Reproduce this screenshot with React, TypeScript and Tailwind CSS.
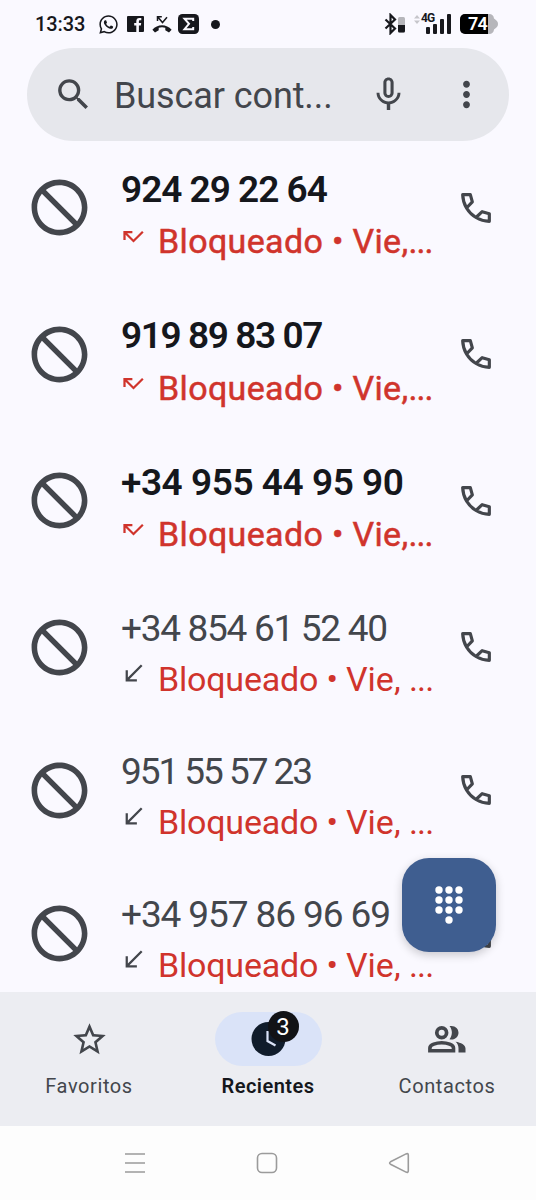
import { clsx } from "clsx";
import {
  MdBlock,
  MdCallMissed,
  MdCallReceived,
  MdMicNone,
  MdMoreVert,
  MdSearch,
  MdStarBorder,
} from "react-icons/md";
import { FaWhatsapp } from "react-icons/fa";

type Call = {
  number: string;
  day: string;
  missed: boolean;
  tracking: string;
};

const CALLS: Call[] = [
  { number: "924 29 22 64", day: "Vie,", missed: true, tracking: "tracking-[-1px]" },
  { number: "919 89 83 07", day: "Vie,", missed: true, tracking: "tracking-[-1.4px]" },
  { number: "+34 955 44 95 90", day: "Vie,", missed: true, tracking: "tracking-[-0.45px]" },
  { number: "+34 854 61 52 40", day: "Vie, ", missed: false, tracking: "tracking-[-1.3px]" },
  { number: "951 55 57 23", day: "Vie, ", missed: false, tracking: "tracking-[-2.05px]" },
  { number: "+34 957 86 96 69", day: "Vie, ", missed: false, tracking: "tracking-[-1.1px]" },
];

const DIALPAD_DOTS = [
  [4, 4], [14, 4], [24, 4],
  [4, 14], [14, 14], [24, 14],
  [4, 24], [14, 24], [24, 24],
  [14, 34],
];

function CallIcon({ className }: { className?: string }) {
  return (
    <svg className={className} viewBox="0 0 24 24" fill="none" stroke="currentColor" strokeWidth="1.9" strokeLinejoin="round">
      <path d="M4 4h4.600l1.200 4.300L6.300 12C4.900 9.600 4.100 6.900 4 4zM6.300 12c1.400 2.300 3.300 4.300 5.700 5.700l3.700-3.500 4.300 1.200V20c-2.900-.1-5.600-.9-8-2.300" />
    </svg>
  );
}

function StatusBar() {
  return (
    <div className="flex h-12 shrink-0 items-center pl-[35px] text-[#17181d]">
      <span className="w-[63px] text-[20px] leading-none font-medium tracking-[-0.1px]">13:33</span>
      <FaWhatsapp className="size-[21px]" />
      <svg className="ml-[8px]" width="17" height="16" viewBox="0 0 17 16">
        <rect width="17" height="16" rx="1" fill="#17181d" />
        <path d="M9.3 16V9.6H7.2V7h2.1V5.2c0-2.1 1.2-3.3 3.1-3.3h1.900v2.400h-1.200c-1 0-1.200.5-1.200 1.200V7h2.300l-.4 2.600h-1.900V16z" fill="#faf9ff" />
      </svg>
      <svg className="ml-[8px]" width="20" height="18" viewBox="0 0 20 18">
        <path d="M.4 14.800c5-6.200 14.200-6.200 19.200 0l-2.600 2.600-3.700-2.200v-2.400c-2.200-.7-4.400-.7-6.600 0v2.400l-3.700 2.200z" fill="#17181d" />
        <path d="M5.500 6V1.700H9.800M5.800 2l4.700 5.500L15 2.200" fill="none" stroke="#17181d" strokeWidth="1.500" />
      </svg>
      <svg className="ml-[6px]" width="21" height="20" viewBox="0 0 21 20">
        <rect width="21" height="20" rx="4.500" fill="#17181d" />
        <path d="M15.200 7V4.700H6.500l4.500 5.100-4.500 5.400h8.700v-2.300" fill="none" stroke="#faf9ff" strokeWidth="2" />
      </svg>
      <span className="ml-[12px] size-[9px] rounded-full bg-[#17181d]" />

      {/* Bluetooth, signal and battery */}
      <svg className="ml-[164px]" width="22" height="22" viewBox="0 0 22 22">
        <path d="M1.500 6.500l9.500 9-4.500 4.500V2l4.500 4.500-9.500 9" fill="none" stroke="#17181d" strokeWidth="2.200" />
        <rect x="14" y="4" width="7" height="15.500" rx="1.500" fill="#b6b6bb" />
        <path d="M14 12h7V18a1.500 1.500 0 0 1-1.500 1.500h-4a1.500 1.500 0 0 1-1.500-1.500z" fill="#17181d" />
      </svg>
      <div className="relative ml-[8px] h-[22px] w-[38px]">
        <svg width="38" height="22" viewBox="0 0 38 22">
          <path d="M0 5.500l3-3.500 3 3.500zM0 7.500h6L3 11z" fill="#c6c6cb" />
          <g fill="#17181d">
            <rect x="12" y="14" width="4" height="7" rx="1" />
            <rect x="19" y="11" width="4" height="10" rx="1" />
            <rect x="26" y="6" width="4" height="15" rx="1" />
            <rect x="33" y="1" width="4" height="20" rx="1" />
          </g>
        </svg>
        <span className="absolute -top-[1px] left-[7px] text-[12px] leading-[12px] font-bold tracking-[-0.8px]">4G</span>
      </div>
      <div className="relative ml-[8px] h-[20px] w-[38px]">
        <svg width="38" height="20" viewBox="0 0 38 20">
          <path d="M5 0H29a5 5 0 0 1 5 4.500c3 2 4 3.500 4 5.500s-1 3.500-4 5.500a5 5 0 0 1-5 4.500H5a5 5 0 0 1-5-5V5a5 5 0 0 1 5-5z" fill="#b6b6bb" />
          <path d="M5 0H28V20H5a5 5 0 0 1-5-5V5a5 5 0 0 1 5-5z" fill="#000" />
        </svg>
        <span className="absolute top-0 left-[8px] text-[18px] leading-[20px] font-semibold tracking-[-0.7px] text-white">74</span>
      </div>
    </div>
  );
}

function SearchBar() {
  return (
    <div className="mx-[27px] flex h-[93px] shrink-0 items-center rounded-full bg-[#e6e7ec] pl-[26px] text-[#43464c]">
      <MdSearch className="size-[41px]" />
      <span className="mt-[2px] ml-[20px] w-[236px] text-[36px] leading-none tracking-[-0.1px] whitespace-nowrap">
        Buscar cont...
      </span>
      <MdMicNone className="ml-[18px] size-[41px]" />
      <MdMoreVert className="ml-[36.500px] size-[41px]" />
    </div>
  );
}

function CallRow({ call }: { call: Call }) {
  return (
    <div className={clsx("flex shrink-0 text-[#43464c]", call.missed ? "h-[146.500px]" : "h-[143px]")}>
      <MdBlock className="mt-[33px] ml-[26px] size-[67px] shrink-0 -scale-x-100" />
      <div className="ml-[27px] w-[330px] shrink-0 pt-[24.500px]">
        <div
          className={clsx(
            "pl-px text-[37px] leading-[48px] whitespace-nowrap",
            call.missed ? "font-semibold text-[#15171c]" : "font-normal",
            call.tracking,
          )}
        >
          {call.number}
        </div>
        <div className={clsx("flex items-start", call.missed ? "pt-[4.500px]" : "pt-[3px]")}>
          {call.missed ? (
            <MdCallMissed className="mt-[5px] size-[27px] text-[#d0342c]" />
          ) : (
            <MdCallReceived className="mt-[4px] size-[27px]" />
          )}
          <div
            className={clsx(
              "ml-[11px] text-[34px] leading-[46px] whitespace-pre text-[#d0342c]",
              call.missed && "[-webkit-text-stroke:0.5px_#d0342c]",
            )}
          >
            <span className={call.missed ? "tracking-[0.35px]" : "tracking-[-0.2px]"}>{"Bloqueado • "}</span>
            <span className={call.missed ? "tracking-[0.3px]" : "tracking-normal"}>{call.day}</span>
            <span className="tracking-[-0.9px]">...</span>
          </div>
        </div>
      </div>
      <CallIcon className="mt-[46.500px] ml-[6px] size-[40px] shrink-0" />
    </div>
  );
}

function BottomNav() {
  return (
    <div className="grid h-[134px] shrink-0 grid-cols-[178px_180px_178px] bg-[#ecedf2] text-[20px] text-[#43464c]">
      <div className="flex flex-col items-center pt-[20px]">
        <div className="flex h-[54px] items-center">
          <MdStarBorder className="size-[39px]" />
        </div>
        <span className="mt-[6px] leading-[28px] tracking-[0.6px]">Favoritos</span>
      </div>
      <div className="flex flex-col items-center pt-[20px]">
        <div className="relative h-[54px] w-[107px] rounded-full bg-[#dae3f8]">
          <svg className="absolute top-[10px] left-[36px]" width="35" height="35" viewBox="0 0 35 35">
            <circle cx="17.500" cy="17" r="17" fill="#101c2b" />
            <path d="M16.500 9v10l8 4.500" fill="none" stroke="#dae3f8" strokeWidth="2.200" />
          </svg>
          <span className="absolute -top-[1px] left-[53px] flex size-[31px] items-center justify-center rounded-full bg-[#121316] text-[24px] leading-none text-white">
            3
          </span>
        </div>
        <span className="mt-[6px] leading-[28px] font-semibold tracking-[0.45px] text-[#15171c]">Recientes</span>
      </div>
      <div className="flex flex-col items-center pt-[20px]">
        <div className="flex h-[54px] items-center">
          <svg width="38" height="28" viewBox="0 0 38 28" fill="currentColor">
            <circle cx="13.700" cy="7.700" r="4.900" fill="none" stroke="currentColor" strokeWidth="3.700" />
            <path
              d="M1.900 25.700V23c0-3.200 6.300-5.200 11.800-5.200s11.800 2 11.800 5.200v2.700z"
              fill="none"
              stroke="currentColor"
              strokeWidth="3.600"
            />
            <path d="M21.500 1.100c5.500-.9 9 2.400 9 6.600s-3.700 7.700-9 6.600c3.200-4 3.200-9.200 0-13.200z" />
            <path d="M27.500 16.800c5.500.8 10 3.100 10 6.800v3.900H30.500v-4.200c0-2.600-.9-4.800-3-6.500z" />
          </svg>
        </div>
        <span className="mt-[6px] leading-[28px] tracking-[0.6px]">Contactos</span>
      </div>
    </div>
  );
}

function SystemNav() {
  return (
    <div className="flex h-[74px] shrink-0 items-center justify-between bg-[#fdfdfd] pr-[126px] pl-[124px]">
      <svg width="22" height="22" viewBox="0 0 22 22" stroke="#9b9b9b" strokeWidth="1.600">
        <path d="M1 2h20M1 11h20M1 20h20" />
      </svg>
      <svg width="22" height="22" viewBox="0 0 22 22" fill="none" stroke="#9b9b9b" strokeWidth="1.600">
        <rect x="1.500" y="1.500" width="19" height="19" rx="4.500" />
      </svg>
      <svg width="22" height="22" viewBox="0 0 22 22" fill="none" stroke="#9b9b9b" strokeWidth="1.600">
        <path d="M2.500 9.800 18 1.900q2.300-.9 2.300 1.400v15.400q0 2.300-2.300 1.400L2.500 12.200q-1.800-1.200 0-2.400z" />
      </svg>
    </div>
  );
}

export default function App() {
  return (
    <div className="relative flex h-[1200px] w-[536px] flex-col overflow-hidden bg-[#faf9ff] font-['Roboto',sans-serif]">
      <StatusBar />
      <SearchBar />
      <div className="flex min-h-0 flex-1 flex-col overflow-hidden">
        {CALLS.map((call) => (
          <CallRow key={call.number} call={call} />
        ))}
      </div>
      <button
        aria-label="Teclado"
        className="absolute top-[858px] left-[402px] flex size-[94px] items-center justify-center rounded-[27px] bg-[#3f5e90] shadow-[0_3px_10px_rgba(0,0,0,0.2)]"
      >
        <svg width="28" height="38" viewBox="0 0 28 38" fill="#fff">
          {DIALPAD_DOTS.map(([cx, cy]) => (
            <circle key={`${cx}-${cy}`} cx={cx} cy={cy} r="3.700" />
          ))}
        </svg>
      </button>
      <BottomNav />
      <SystemNav />
    </div>
  );
}
